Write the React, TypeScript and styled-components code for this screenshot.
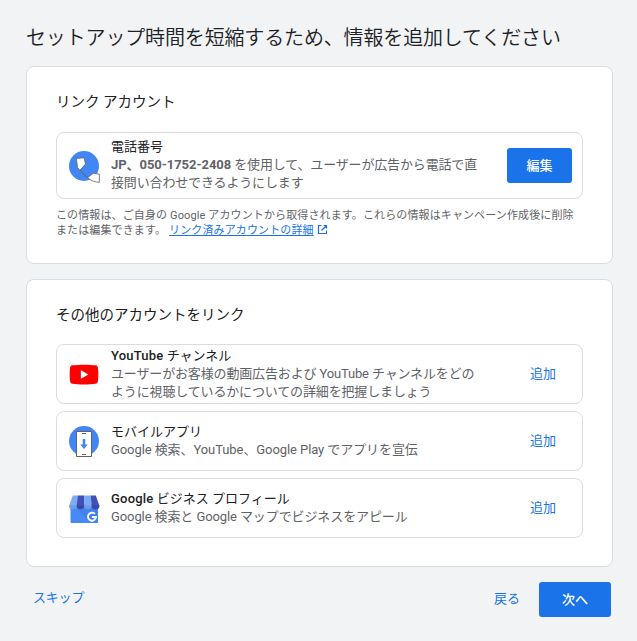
import React from "react";
import styled, { createGlobalStyle } from "styled-components";

const GlobalStyle = createGlobalStyle`
  * { box-sizing: border-box; }
  body {
    margin: 0;
    background: #f1f3f4;
    color: #202124;
    font-family: Roboto, "Noto Sans CJK JP", sans-serif;
    overflow: hidden;
  }
`;

const Page = styled.main`
  width: 637px;
  height: 641px;
  padding: 23px 24px 0 26px;
  white-space: nowrap;
`;

const PageTitle = styled.h1`
  margin: 0 0 13px;
  height: 30px;
  font-size: 20px;
  line-height: 30px;
  font-weight: 350;
  letter-spacing: -0.15px;
`;

const Card = styled.section<{ $height: number }>`
  height: ${(p) => p.$height}px;
  margin-bottom: 15px;
  padding: 24px 29px 0;
  background: #fff;
  border: 1px solid #dadce0;
  border-radius: 8px;
`;

const CardTitle = styled.h2<{ $gap: number }>`
  margin: 0 0 ${(p) => p.$gap}px;
  font-size: 14.5px;
  line-height: 24px;
  font-weight: 400;
`;

const Stack = styled.div`
  display: flex;
  flex-direction: column;
  gap: 7px;
`;

const Item = styled.div<{ $height?: number }>`
  display: flex;
  align-items: center;
  height: ${(p) => p.$height ?? 60}px;
  padding: 0 10px 0 11px;
  border: 1px solid #dadce0;
  border-radius: 8px;
`;

const ItemIcon = styled.svg`
  flex: none;
  width: 34px;
  height: 34px;
  margin-right: 9px;
`;

const ItemText = styled.div<{ $lift?: number }>`
  flex: 1;
  padding-bottom: ${(p) => p.$lift ?? 0}px;
  font-size: 13px;
  line-height: 18px;
`;

const ItemTitle = styled.div`
  color: #202124;
`;

const ItemBody = styled.div<{ $spacing?: number }>`
  color: #5f6368;
  letter-spacing: ${(p) => p.$spacing ?? -0.15}px;
`;

const Latin = styled.span`
  font-weight: 500;
  letter-spacing: 0.2px;
`;

const Strong = styled.strong`
  font-weight: 700;
  letter-spacing: -0.05px;
`;

const Button = styled.button<{ $width: number }>`
  width: ${(p) => p.$width}px;
  height: 35px;
  padding: 0;
  border: 0;
  border-radius: 3px;
  background: #1a73e8;
  color: #fff;
  font: 500 13px/33px Roboto, "Noto Sans CJK JP", sans-serif;
`;

const TextButton = styled.button`
  padding: 0;
  border: 0;
  background: none;
  color: #1a73e8;
  font: 400 13px/20px Roboto, "Noto Sans CJK JP", sans-serif;
`;

const AddButton = styled(TextButton)`
  margin: 0 16px 0 0;
`;

const Note = styled.p`
  margin: 9px 0 0;
  color: #5f6368;
  font-size: 11px;
  line-height: 15px;
  letter-spacing: 0.12px;
`;

const NoteLink = styled.a`
  margin-left: 3px;
  color: #1a73e8;
  text-decoration: underline;
`;

const ExternalIcon = styled.svg`
  width: 11px;
  height: 11px;
  margin-left: 3px;
  vertical-align: -1px;
`;

const Footer = styled.footer`
  display: flex;
  align-items: center;
  padding: 0 2px 0 7px;
`;

const SkipButton = styled(TextButton)`
  margin: 0 auto 4px 0;
  letter-spacing: -0.2px;
`;

const BackButton = styled(TextButton)`
  margin: 0 19px 2px 0;
`;

const PhoneIcon = () => (
  <ItemIcon viewBox="0 0 34 34">
    <circle cx="16" cy="17" r="15" fill="#4285f4" />
    <path d="M10.500 17C12.500 22.500 15 26 21 29" fill="none" stroke="#5f6368" />
    <path d="M8.300 9.400l7.800-.6 1.400 6.300-5.700 6.200-2.200-2.700z" fill="#fff" stroke="#5f6368" strokeWidth=".8" />
    <path d="M19.500 28.800l5.700-4.500 6.200.8v8.200c-4.500 0-8.400-1.800-11.900-4.500z" fill="#fff" stroke="#5f6368" strokeWidth=".8" />
  </ItemIcon>
);

const YoutubeIcon = () => (
  <ItemIcon viewBox="0 0 34 34">
    <path d="M4.500 8.300c6-.9 18-.9 23 0 1.500.2 2.200 1.100 2.400 2.400.6 4.400.6 9.200 0 13.600-.2 1.300-.9 2.200-2.400 2.400-6 .9-17 .9-23 0-1.500-.2-2.200-1.100-2.400-2.400-.6-4.400-.6-9.200 0-13.600C2.300 9.400 3 8.500 4.500 8.300z" fill="#f00" />
    <path d="M12.900 13.200v8.600l7.500-4.300z" fill="#fff" />
  </ItemIcon>
);

const MobileIcon = () => (
  <ItemIcon viewBox="0 0 34 34">
    <circle cx="16" cy="17" r="15" fill="#4285f4" />
    <path d="M8.500 7.500h15v25h-15z" fill="#fff" stroke="#5f6368" />
    <path d="M14 9.500h4M14 30.500h4" stroke="#5f6368" />
    <path d="M14.700 15h2.600v5.500h2.500L16 25l-3.800-4.500h2.500z" fill="#4285f4" />
  </ItemIcon>
);

const BusinessIcon = () => (
  <ItemIcon viewBox="0 0 34 34">
    <path d="M2.500 13h27.500v18q0 1-1 1h-25.500q-1 0-1-1z" fill="#4989f5" />
    <path d="M9 18l14 14H29q1 0 1-1V14z" fill="#3c7ae4" opacity=".45" />
    <path d="M4.800 4.500h4.900L9 15H1z" fill="#7baaf7" />
    <path d="M9.700 4.500h6.500V15H8.700z" fill="#3f51b5" />
    <path d="M16.200 4.500h6.400l1.100 10.500h-7.500z" fill="#7baaf7" />
    <path d="M22.600 4.500h5.200L31.500 15h-7.800z" fill="#3f51b5" />
    <path d="M1 14.500h7.700a3.850 3.850 0 0 1-7.700 0z" fill="#709be0" />
    <path d="M8.700 14.500h7.500a3.750 3.750 0 0 1-7.500 0z" fill="#3949a3" />
    <path d="M16.200 14.500h7.500a3.750 3.750 0 0 1-7.500 0z" fill="#709be0" />
    <path d="M23.700 14.500h7.800a3.900 3.900 0 0 1-7.800 0z" fill="#3949a3" />
    <path d="M26.800 22.800a4 4 0 1 0 1.200 3.200h-4" fill="none" stroke="#fff" strokeWidth="1.900" />
  </ItemIcon>
);

export default function App() {
  return (
    <>
      <GlobalStyle />
      <Page>
        <PageTitle>セットアップ時間を短縮するため、情報を追加してください</PageTitle>
        <Card $height={198}>
          <CardTitle $gap={17}>リンク アカウント</CardTitle>
          <Item $height={67}>
            <PhoneIcon />
            <ItemText $lift={2}>
              <ItemTitle>電話番号</ItemTitle>
              <ItemBody>
                <Strong>JP、050-1752-2408</Strong> を使用して、ユーザーが広告から電話で直
                <br />
                接問い合わせできるようにします
              </ItemBody>
            </ItemText>
            <Button $width={65}>編集</Button>
          </Item>
          <Note>
            この情報は、ご自身の Google アカウントから取得されます。これらの情報はキャンペーン作成後に削除
            <br />
            または編集できます。
            <NoteLink>リンク済みアカウントの詳細</NoteLink>
            <ExternalIcon viewBox="0 0 11 11" fill="none" stroke="#1a73e8" strokeWidth="1.2">
              <path d="M4.500 1.500h-3v8h8v-3M6.500 1.500h3v3M9.500 1.500l-5 5" />
            </ExternalIcon>
          </Note>
        </Card>
        <Card $height={288}>
          <CardTitle $gap={16}>その他のアカウントをリンク</CardTitle>
          <Stack>
            <Item>
              <YoutubeIcon />
              <ItemText>
                <ItemTitle><Latin>YouTube</Latin> チャンネル</ItemTitle>
                <ItemBody>
                  ユーザーがお客様の動画広告および YouTube チャンネルをどの
                  <br />
                  ように視聴しているかについての詳細を把握しましょう
                </ItemBody>
              </ItemText>
              <AddButton>追加</AddButton>
            </Item>
            <Item>
              <MobileIcon />
              <ItemText>
                <ItemTitle>モバイルアプリ</ItemTitle>
                <ItemBody $spacing={-0.08}>Google 検索、YouTube、Google Play でアプリを宣伝</ItemBody>
              </ItemText>
              <AddButton>追加</AddButton>
            </Item>
            <Item>
              <BusinessIcon />
              <ItemText>
                <ItemTitle><Latin>Google</Latin> ビジネス プロフィール</ItemTitle>
                <ItemBody $spacing={-0.1}>Google 検索と Google マップでビジネスをアピール</ItemBody>
              </ItemText>
              <AddButton>追加</AddButton>
            </Item>
          </Stack>
        </Card>
        <Footer>
          <SkipButton>スキップ</SkipButton>
          <BackButton>戻る</BackButton>
          <Button $width={72}>次へ</Button>
        </Footer>
      </Page>
    </>
  );
}
